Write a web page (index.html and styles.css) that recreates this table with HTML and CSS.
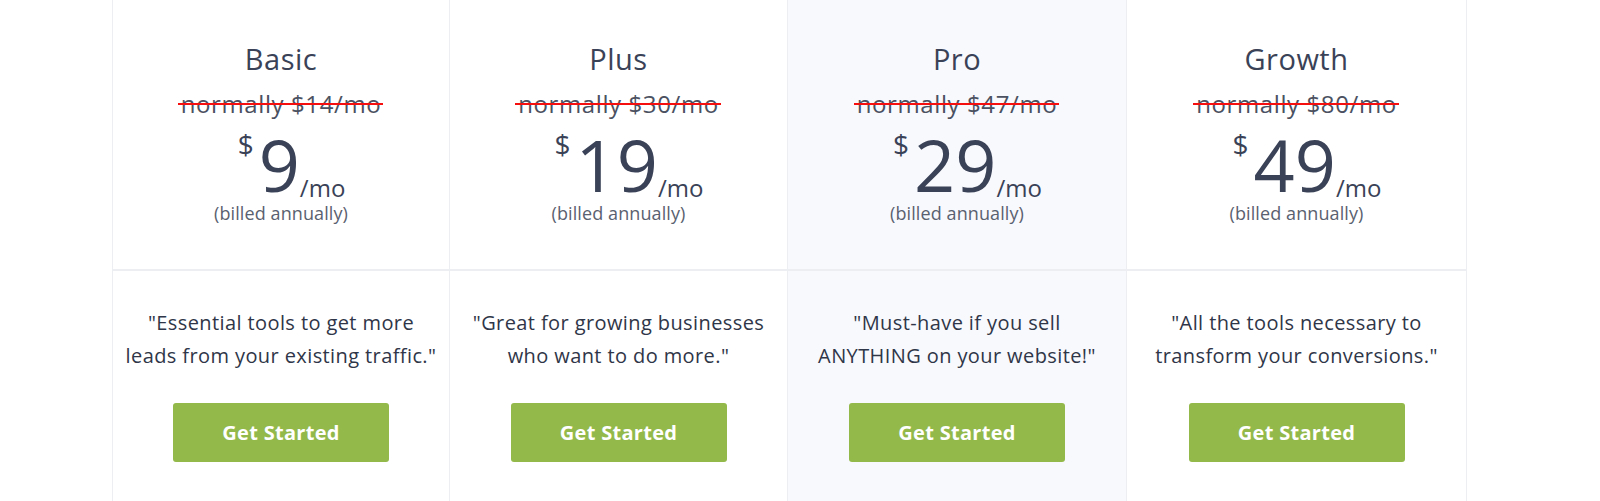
FILE: index.html
```html
<!DOCTYPE html>
<html>
<head>
<meta charset="utf-8">
<link rel="stylesheet" href="styles.css">
</head>
<body>
<div class="pricing">
  <div class="plan">
    <div class="plan-top">
      <div class="name">Basic</div>
      <div class="old"><span class="strike">normally $14/mo</span></div>
      <div class="price"><span class="cur">$</span><span class="amt">9</span><span class="per">/mo</span></div>
      <div class="billed">(billed annually)</div>
    </div>
    <div class="plan-bottom">
      <p class="quote">"Essential tools to get more<br>leads from your existing traffic."</p>
      <a class="btn">Get Started</a>
    </div>
  </div>
  <div class="plan">
    <div class="plan-top">
      <div class="name">Plus</div>
      <div class="old"><span class="strike">normally $30/mo</span></div>
      <div class="price"><span class="cur">$</span><span class="amt">19</span><span class="per">/mo</span></div>
      <div class="billed">(billed annually)</div>
    </div>
    <div class="plan-bottom">
      <p class="quote">"Great for growing businesses<br>who want to do more."</p>
      <a class="btn">Get Started</a>
    </div>
  </div>
  <div class="plan featured">
    <div class="plan-top">
      <div class="name">Pro</div>
      <div class="old"><span class="strike">normally $47/mo</span></div>
      <div class="price"><span class="cur">$</span><span class="amt">29</span><span class="per">/mo</span></div>
      <div class="billed">(billed annually)</div>
    </div>
    <div class="plan-bottom">
      <p class="quote">"Must-have if you sell<br>ANYTHING on your website!"</p>
      <a class="btn">Get Started</a>
    </div>
  </div>
  <div class="plan last">
    <div class="plan-top">
      <div class="name">Growth</div>
      <div class="old"><span class="strike">normally $80/mo</span></div>
      <div class="price"><span class="cur">$</span><span class="amt">49</span><span class="per">/mo</span></div>
      <div class="billed">(billed annually)</div>
    </div>
    <div class="plan-bottom">
      <p class="quote">"All the tools necessary to<br>transform your conversions."</p>
      <a class="btn">Get Started</a>
    </div>
  </div>
</div>
</body>
</html>
```

FILE: styles.css
```css
html, body {
  margin: 0;
  padding: 0;
  background: #ffffff;
}
body {
  font-family: "Open Sans", "Liberation Sans", sans-serif;
  color: #3a4257;
  height: 501px;
  overflow: hidden;
}
.pricing {
  display: grid;
  grid-template-columns: 337px 338px 339px 341px;
  margin-left: 112px;
  width: 1355px;
}
.plan {
  border-left: 1px solid #eceef2;
  display: flex;
  flex-direction: column;
  height: 501px;
}
.plan.last {
  border-right: 1px solid #eceef2;
}
.plan.featured {
  background: #f8f9fd;
}
.plan-top {
  height: 271px;
  border-bottom: 2px solid #eceef2;
  box-sizing: border-box;
  display: flex;
  flex-direction: column;
  align-items: center;
  padding-top: 41px;
}
.name {
  font-size: 29px;
  line-height: 36px;
  letter-spacing: 0.5px;
  color: #3a4257;
}
.old {
  margin-top: 12px;
  font-size: 24px;
  line-height: 30px;
  letter-spacing: 0.6px;
  color: #4b5161;
  white-space: nowrap;
}
.strike {
  position: relative;
}
.strike::after {
  content: "";
  position: absolute;
  left: -3px;
  right: -2px;
  top: 16px;
  height: 2px;
  background: #f50f0f;
}
.price {
  display: flex;
  align-items: flex-start;
  justify-content: center;
  margin-top: 8px;
  padding-left: 21px;
}
.cur {
  font-size: 28px;
  line-height: 28px;
  margin-top: 3px;
  margin-right: 5px;
}
.amt {
  font-size: 72px;
  line-height: 74px;
  color: #3a4257;
}
.per {
  font-size: 24px;
  line-height: 24px;
  margin-top: 49px;
  margin-left: 0;
}
.billed {
  font-size: 18px;
  line-height: 22px;
  letter-spacing: 0.1px;
  margin-top: 1px;
  color: #5a6170;
}
.plan-bottom {
  display: flex;
  flex-direction: column;
  align-items: center;
  padding-top: 35px;
}
.quote {
  margin: 0;
  font-size: 20px;
  line-height: 33px;
  letter-spacing: 0.4px;
  text-align: center;
  white-space: nowrap;
  color: #2f3648;
}
.btn {
  margin-top: 31px;
  width: 216px;
  height: 59px;
  background: #93b94a;
  border-radius: 3px;
  color: #ffffff;
  font-weight: 700;
  font-size: 20px;
  letter-spacing: 0.3px;
  display: flex;
  align-items: center;
  justify-content: center;
}
```
